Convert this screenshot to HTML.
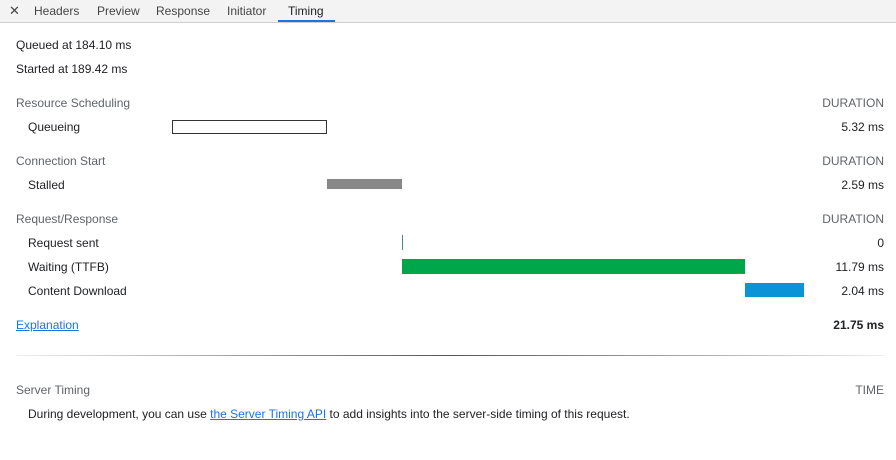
<!DOCTYPE html>
<html><head><style>
body{margin:0;width:896px;height:460px;background:#fff;font-family:"Liberation Sans",sans-serif;font-size:12px;color:#202124;position:relative;overflow:hidden}
.t{position:absolute;white-space:nowrap;line-height:14px}
.g{color:#5f6368}
.r{right:12px;text-align:right}
.tabs{position:absolute;left:0;top:0;width:896px;height:23px;background:#f3f3f3;border-bottom:1px solid #d0d0d0;box-sizing:border-box}
.tab{position:absolute;top:4px;color:#444;line-height:14px}
a{color:#1a73e8;text-decoration:underline}
</style></head><body>
<div class="tabs">
<div class="tab" style="left:9px;font-size:13px">✕</div>
<div class="tab" style="left:34px">Headers</div>
<div class="tab" style="left:97px">Preview</div>
<div class="tab" style="left:156px">Response</div>
<div class="tab" style="left:227px">Initiator</div>
<div class="tab" style="left:288px;color:#202124">Timing</div>
<div style="position:absolute;left:278px;top:20px;width:57px;height:2px;background:#1a73e8"></div>
</div>
<div class="t" style="left:16px;top:38px">Queued at 184.10 ms</div>
<div class="t" style="left:16px;top:62px">Started at 189.42 ms</div>

<div class="t g" style="left:16px;top:96px">Resource Scheduling</div><div class="t g r" style="top:96px">DURATION</div>
<div class="t" style="left:28px;top:120px">Queueing</div><div class="t r" style="top:120px">5.32 ms</div>
<div style="position:absolute;left:172px;top:120px;width:155px;height:14px;border:1px solid #333;box-sizing:border-box"></div>

<div class="t g" style="left:16px;top:154px">Connection Start</div><div class="t g r" style="top:154px">DURATION</div>
<div class="t" style="left:28px;top:178px">Stalled</div><div class="t r" style="top:178px">2.59 ms</div>
<div style="position:absolute;left:327px;top:179px;width:75px;height:10px;background:#888"></div>

<div class="t g" style="left:16px;top:212px">Request/Response</div><div class="t g r" style="top:212px">DURATION</div>
<div class="t" style="left:28px;top:236px">Request sent</div><div class="t r" style="top:236px">0</div>
<div style="position:absolute;left:402px;top:235px;width:1px;height:15px;background:#4a8a8a"></div>
<div class="t" style="left:28px;top:260px">Waiting (TTFB)</div><div class="t r" style="top:260px">11.79 ms</div>
<div style="position:absolute;left:402px;top:259px;width:343px;height:15px;background:#00a64a"></div>
<div class="t" style="left:28px;top:284px">Content Download</div><div class="t r" style="top:284px">2.04 ms</div>
<div style="position:absolute;left:745px;top:283px;width:59px;height:14px;background:#0b93d8"></div>

<div class="t" style="left:16px;top:318px"><a>Explanation</a></div><div class="t r" style="top:318px;font-weight:bold">21.75 ms</div>
<div style="position:absolute;left:16px;top:355px;width:868px;height:1px;background:linear-gradient(90deg,#eee,#555 50%,#eee)"></div>

<div class="t g" style="left:16px;top:383px">Server Timing</div><div class="t g r" style="top:383px">TIME</div>
<div class="t" style="left:28px;top:407px">During development, you can use <a>the Server Timing API</a> to add insights into the server-side timing of this request.</div>
</body></html>
